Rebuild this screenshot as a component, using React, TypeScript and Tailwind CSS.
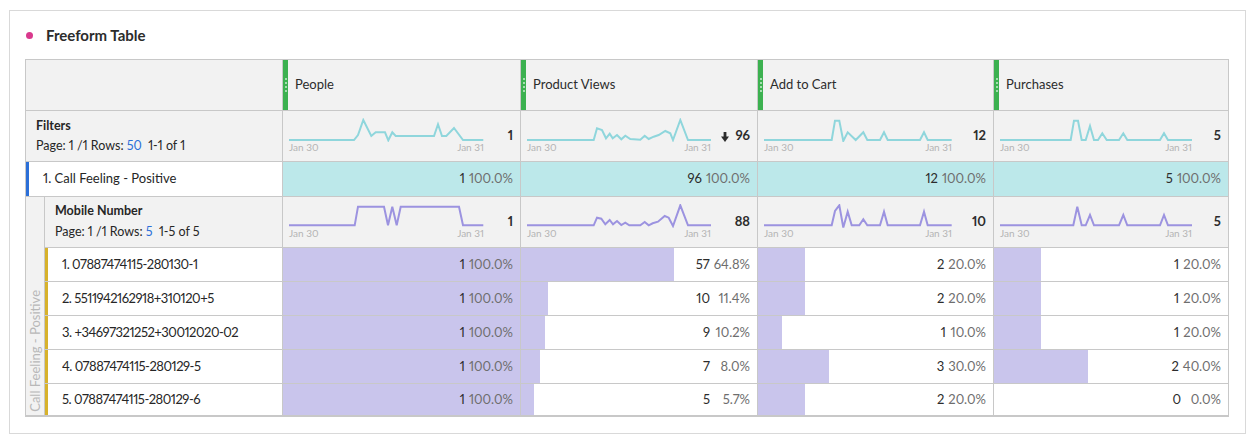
import React from "react";

type Pt = [number, number];

const CYAN = "#8fd6dc";
const PURPLE = "#9c93e0";

const filterSparks: { w: number; pts: Pt[]; value: string; arrow?: boolean }[] = [
  {
    w: 195,
    value: "1",
    pts: [[0,22],[65,22],[69,17],[74.3,2],[82.3,18],[86.7,14.3],[96,14.3],[99.3,22.3],[103.3,14.3],[106.7,18],[145,18],[149,6.3],[153,18],[157.3,18],[165,10],[174,22],[194.3,22]],
  },
  {
    w: 184,
    value: "96",
    arrow: true,
    pts: [[0,22],[66.7,22],[70,10.3],[75,12],[79,20.3],[82.7,15.7],[85.7,20.3],[90,17],[94.3,21.3],[98.3,17.7],[103.3,21],[113.3,21.7],[117.7,17.7],[121.7,21],[126.7,18.7],[131.7,17],[138.3,13],[143.3,15.3],[146,22],[153.3,2],[161,22],[184,22]],
  },
  {
    w: 188,
    value: "12",
    pts: [[0,22],[67.7,22],[71,2.7],[75.3,2.7],[79.3,23],[83.7,14.3],[91.7,22],[99.3,14.3],[103.3,22],[116,22],[120,14.3],[123.7,22],[156,22],[160,14.3],[163.7,22],[187.7,22]],
  },
  {
    w: 192,
    value: "5",
    pts: [[0,22],[70.7,22],[74,2.7],[78,2.7],[81.7,22],[85.7,22],[90,8],[94,22],[98,22],[102.3,15.3],[106.7,22],[119,22],[123.3,15.3],[127.3,22],[160,22],[164,15.3],[168,22],[192,22]],
  },
];

const mobileSparks: { w: number; pts: Pt[]; value: string }[] = [
  {
    w: 195,
    value: "1",
    pts: [[0,21.3],[65.7,21.3],[69,2.7],[95,2.7],[99,21.3],[103.3,2.7],[107.7,21.3],[111.7,2.7],[170,2.7],[174,21.3],[194.3,21.3]],
  },
  {
    w: 184,
    value: "88",
    pts: [[0,21.3],[66.7,21.3],[70,13.7],[74.3,14.7],[78.3,20.3],[82.7,16],[86,20.3],[90,17],[94.3,21],[98.3,18.7],[102.3,21.3],[113.3,21.3],[117.7,18],[121.7,21.3],[125.7,19.3],[131,17.7],[137.7,12],[141.7,13.7],[146,22],[153.3,1.3],[161,21.3],[184,21.3]],
  },
  {
    w: 188,
    value: "10",
    pts: [[0,21.3],[67.7,21.3],[71,7],[75.3,1.3],[79.3,23.5],[83.7,7.7],[87.7,21.3],[95.3,21.3],[99.3,15.3],[103.3,21.3],[116,21.3],[120,7.7],[123.7,21.3],[156,21.3],[160,7.7],[163.7,21.3],[187.7,21.3]],
  },
  {
    w: 192,
    value: "5",
    pts: [[0,21.3],[73.3,21.3],[77.3,2.7],[81.7,21.3],[85.7,21.3],[90,11],[94,21.3],[119,21.3],[123.3,11],[127.3,21.3],[160,21.3],[164,11],[168,21.3],[192,21.3]],
  },
];

const rows: { label: string; cells: [string, string, number][] }[] = [
  { label: "1. 07887474115-280130-1", cells: [["1", "100.0%", 100], ["57", "64.8%", 64.8], ["2", "20.0%", 20], ["1", "20.0%", 20]] },
  { label: "2. 5511942162918+310120+5", cells: [["1", "100.0%", 100], ["10", "11.4%", 11.4], ["2", "20.0%", 20], ["1", "20.0%", 20]] },
  { label: "3. +34697321252+30012020-02", cells: [["1", "100.0%", 100], ["9", "10.2%", 10.2], ["1", "10.0%", 10], ["1", "20.0%", 20]] },
  { label: "4. 07887474115-280129-5", cells: [["1", "100.0%", 100], ["7", "8.0%", 8], ["3", "30.0%", 30], ["2", "40.0%", 40]] },
  { label: "5. 07887474115-280129-6", cells: [["1", "100.0%", 100], ["5", "5.7%", 5.7], ["2", "20.0%", 20], ["0", "0.0%", 0]] },
];

const metrics = ["People", "Product Views", "Add to Cart", "Purchases"];

const Sparkline = ({ w, pts, color }: { w: number; pts: Pt[]; color: string }) => (
  <div style={{ width: w }} className="shrink-0">
    <svg width={w} height={24} viewBox={`0 0 ${w} 24`} className="block">
      <polyline
        points={pts.map((p) => p.join(",")).join(" ")}
        fill="none"
        stroke={color}
        strokeWidth={2}
        strokeLinejoin="miter"
      />
    </svg>
    <div className="flex justify-between text-[10px] leading-[11px] text-[#b4b4b4]">
      <span>Jan 30</span>
      <span>Jan 31</span>
    </div>
  </div>
);

const DownArrow = () => (
  <svg width="8" height="10" viewBox="0 0 8 10" className="mr-[6px] mt-[1px]">
    <rect x="2.6" y="0" width="2.8" height="5" fill="#2c2c2c" />
    <path d="M0 4.5 L8 4.5 L4 10 Z" fill="#2c2c2c" />
  </svg>
);

const SparkCell = ({ w, pts, value, color, arrow }: { w: number; pts: Pt[]; value: string; color: string; arrow?: boolean }) => (
  <div className="flex border-l border-[#c8c8c8] pl-[6px] pr-[7px] pt-[7px]">
    <Sparkline w={w} pts={pts} color={color} />
    <div className="flex flex-1 items-center justify-end mt-[10px] h-[16px] text-[13px] font-bold text-[#2c2c2c]">
      {arrow && <DownArrow />}
      {value}
    </div>
  </div>
);

const ValueCell = ({ n, pct, bar, color }: { n: string; pct: string; bar: number; color: string }) => (
  <div className="relative flex items-center justify-end border-l border-[#c8c8c8] pr-[7px] text-[13px]">
    <div className="absolute left-0 top-0 bottom-0" style={{ width: `${bar}%`, background: color }} />
    <span className="relative text-[#2c2c2c]">{n}</span>
    <span className="relative ml-[4px] min-w-[36px] text-right text-[#6e6e6e]">{pct}</span>
  </div>
);

const GreenHandle = () => (
  <div className="flex h-full w-[5px] flex-col items-center justify-center gap-[2px] bg-[#3cb150]">
    {[0, 1, 2, 3].map((i) => (
      <div key={i} className="h-[2px] w-[2px] rounded-full bg-[#c9ecd0]" />
    ))}
  </div>
);

const cols = "grid grid-cols-[256px_238px_237px_236px_235px]";
const nestedCols = "grid grid-cols-[237px_238px_237px_236px_235px]";

export default function App() {
  return (
    <div className="min-h-screen bg-white pl-[9px] pt-[10px] font-['Lato','Liberation_Sans',sans-serif] text-[#262626] [font-variant-numeric:proportional-nums]">
      <div className="w-[1237px] border border-[#d9d9d9] bg-white pb-[16px]">
        {/* title */}
        <div className="flex h-[48px] items-center pl-[16px]">
          <div className="h-[7px] w-[7px] rounded-full bg-[#d9398d]" />
          <div className="ml-[13px] text-[15px] font-bold text-[#2c2c2c]">Freeform Table</div>
        </div>

        <div className="ml-[15px] w-[1204px] border border-b-2 border-[#c8c8c8]">
          {/* header */}
          <div className={`${cols} h-[50px] bg-[#f2f2f2]`}>
            <div />
            {metrics.map((m) => (
              <div key={m} className="flex h-full items-center border-l border-[#c8c8c8]">
                <GreenHandle />
                <span className="ml-[7px] text-[13px] text-[#2c2c2c]">{m}</span>
              </div>
            ))}
          </div>

          {/* filters */}
          <div className={`${cols} h-[51px] border-t border-[#c8c8c8] bg-[#f2f2f2]`}>
            <div className="pl-[10px] pt-[7px] text-[12.5px] leading-[16px]">
              <div className="font-bold">Filters</div>
              <div className="mt-[4px]">
                Page: 1 /1 Rows: <span className="text-[#2b6fd8]">50</span>&nbsp; 1-1 of 1
              </div>
            </div>
            {filterSparks.map((s, i) => (
              <SparkCell key={i} w={s.w} pts={s.pts} value={s.value} arrow={s.arrow} color={CYAN} />
            ))}
          </div>

          {/* call feeling */}
          <div className={`${cols} h-[35px] border-t border-[#c8c8c8]`}>
            <div className="flex items-center border-l-[3px] border-[#2b6fd8] pl-[14px] text-[13px]">
              1. Call Feeling - Positive
            </div>
            {[["1"], ["96"], ["12"], ["5"]].map(([n], i) => (
              <ValueCell key={i} n={n} pct="100.0%" bar={100} color="#bce8ea" />
            ))}
          </div>

          {/* breakdown */}
          <div className="flex border-t border-[#c8c8c8]">
            <div className="flex w-[19px] shrink-0 flex-col items-center justify-end border-r border-[#c8c8c8] bg-[#f2f2f2] pb-[3px]">
              <span className="rotate-180 text-[13px] leading-[18px] text-[#b8b8b8] [writing-mode:vertical-rl]">
                Call Feeling - Positive
              </span>
            </div>
            <div className="flex-1">
              <div className={`${nestedCols} h-[50px] bg-[#f2f2f2]`}>
                <div className="pl-[10px] pt-[6px] text-[12.5px] leading-[16px]">
                  <div className="font-bold">Mobile Number</div>
                  <div className="mt-[5px]">
                    Page: 1 /1 Rows: <span className="text-[#2b6fd8]">5</span>&nbsp; 1-5 of 5
                  </div>
                </div>
                {mobileSparks.map((s, i) => (
                  <SparkCell key={i} w={s.w} pts={s.pts} value={s.value} color={PURPLE} />
                ))}
              </div>
              {rows.map((r, ri) => (
                <div key={ri} className={`${nestedCols} ${ri === 4 ? "h-[32px]" : "h-[34px]"} border-t border-[#c8c8c8]`}>
                  <div className="flex items-center border-l-[3px] border-[#d7b22c] pl-[14px] text-[13px] tracking-[-0.5px]">
                    {r.label}
                  </div>
                  {r.cells.map(([n, pct, bar], ci) => (
                    <ValueCell key={ci} n={n} pct={pct} bar={bar} color="#c9c5ec" />
                  ))}
                </div>
              ))}
            </div>
          </div>
        </div>
      </div>
    </div>
  );
}
